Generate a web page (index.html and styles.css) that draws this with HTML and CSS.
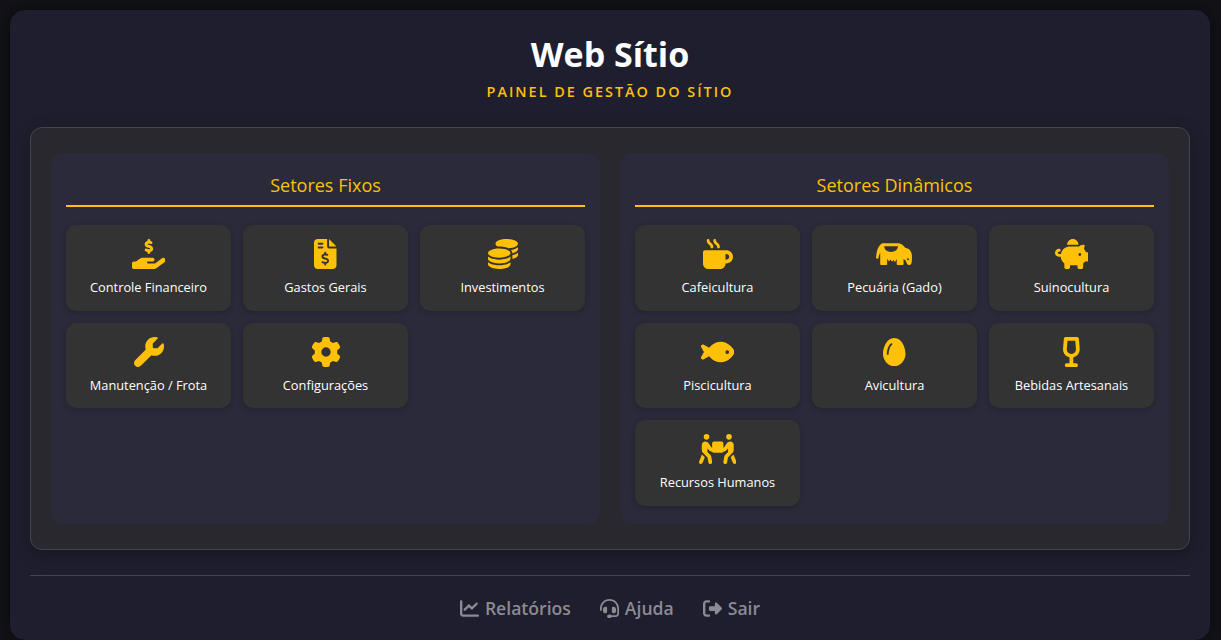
FILE: index.html
```html
<!DOCTYPE html>
<html lang="pt-BR">
<head>
    <meta charset="UTF-8">
    <title>Web Sítio</title>
    <link rel="stylesheet" href="styles.css">
</head>
<body>
    <div class="app">
        <header class="top">
            <h1>Web Sítio</h1>
            <p class="subtitle">Painel de Gestão do Sítio</p>
        </header>

        <main class="board">
            <section class="sector">
                <h2>Setores Fixos</h2>
                <div class="grid">
                    <a class="tile" href="#">
                        <svg class="icon" viewBox="0 0 576 512"><path d="M312 24V34.5c6.4 1.2 12.6 2.7 18.2 4.2c12.8 3.4 20.4 16.6 17 29.4s-16.6 20.4-29.4 17c-10.9-2.9-21.1-4.9-30.2-5c-7.3-.1-14.7 1.7-19.4 4.4c-2.1 1.3-3.1 2.4-3.5 3c-.3 .5-.7 1.2-.7 2.8c0 .3 0 .5 0 .6c.2 .2 .9 1.2 3.3 2.6c5.8 3.5 14.4 6.2 27.4 10.1l.9 .3c11.1 3.3 25.9 7.8 37.9 15.3c13.7 8.6 26.1 22.9 26.4 44.9c.3 22.5-11.4 38.9-26.7 48.5c-6.7 4.1-13.9 7-21.3 8.8V232c0 13.3-10.7 24-24 24s-24-10.7-24-24V220.6c-9.5-2.3-18.2-5.3-25.6-7.8c-2.1-.7-4.1-1.4-6-2c-12.6-4.2-19.4-17.8-15.2-30.4s17.8-19.4 30.4-15.2c2.6 .9 5 1.7 7.3 2.5c13.6 4.6 23.4 7.9 33.9 8.3c8 .3 15.1-1.6 19.2-4.1c1.9-1.2 2.8-2.2 3.2-2.9c.4-.6 .9-1.8 .8-4.1l0-.2c0-1 0-2.1-4-4.6c-5.7-3.6-14.3-6.4-27.1-10.3l-1.9-.6c-10.8-3.2-25-7.5-36.4-14.4c-13.5-8.1-26.5-22-26.6-44.1c-.1-22.9 12.9-38.6 27.7-47.4c6.4-3.8 13.3-6.4 20.2-8.2V24c0-13.3 10.7-24 24-24s24 10.7 24 24zM568.2 336.3c13.1 17.8 9.3 42.8-8.5 55.9L433.1 485.5c-23.4 17.2-51.6 26.5-80.7 26.5H192 32c-17.7 0-32-14.3-32-32V416c0-17.7 14.3-32 32-32H68.8l44.9-36c22.7-18.2 50.9-28 80-28H272h16 64c17.7 0 32 14.3 32 32s-14.3 32-32 32H288 272c-8.8 0-16 7.2-16 16s7.2 16 16 16H392.6l119.7-88.2c17.8-13.1 42.8-9.3 55.9 8.5z"/></svg>
                        <span>Controle Financeiro</span>
                    </a>
                    <a class="tile" href="#">
                        <svg class="icon" viewBox="0 0 384 512"><path d="M64 0C28.7 0 0 28.7 0 64V448c0 35.3 28.7 64 64 64H320c35.3 0 64-28.7 64-64V160H256c-17.7 0-32-14.3-32-32V0H64zM256 0V128H384L256 0zM64 80c0-8.8 7.2-16 16-16h64c8.8 0 16 7.2 16 16s-7.2 16-16 16H80c-8.8 0-16-7.2-16-16zm0 64c0-8.8 7.2-16 16-16h64c8.8 0 16 7.2 16 16s-7.2 16-16 16H80c-8.8 0-16-7.2-16-16zm128 72c8.8 0 16 7.2 16 16v17.3c8.5 1.2 16.7 3.1 24.1 5.1c8.5 2.3 13.6 11 11.3 19.6s-11 13.6-19.6 11.3c-11.1-3-22-5.2-32.1-5.3c-8.4-.1-17.4 1.8-23.6 5.5c-5.7 3.4-8.1 7.3-8.1 12.8c0 3.7 1.3 6.5 7.3 10.1c6.9 4.1 16.6 7.1 29.2 10.9l.5 .1c11.3 3.4 25.3 7.6 36.3 14.6c12.1 7.6 22.4 19.7 22.7 38.2c.3 19.3-9.6 33.3-22.9 41.6c-7.7 4.8-16.4 7.6-25.1 9.1V440c0 8.8-7.2 16-16 16s-16-7.2-16-16V422.2c-11.2-2.1-21.7-5.7-30.9-8.9c-2.1-.7-4.2-1.4-6.2-2.1c-8.4-2.8-12.9-11.9-10.1-20.2s11.9-12.9 20.2-10.1c2.5 .8 4.8 1.6 7.1 2.4c13.6 4.6 24.6 8.4 36.3 8.7c9.1 .3 17.9-1.7 23.7-5.3c5.1-3.2 7.9-7.3 7.8-14c-.1-4.6-1.8-7.8-7.7-11.6c-6.8-4.3-16.5-7.4-29-11.2l-1.6-.5c-11-3.3-24.3-7.3-34.8-13.7c-12-7.2-22.6-18.9-22.7-37.3c-.1-19.4 10.8-32.8 23.8-40.5c7.5-4.4 15.8-7.2 24.1-8.7V232c0-8.8 7.2-16 16-16z"/></svg>
                        <span>Gastos Gerais</span>
                    </a>
                    <a class="tile" href="#">
                        <svg class="icon" viewBox="0 0 512 512"><path d="M512 80c0 18-14.3 34.6-38.4 48c-29.1 16.1-72.5 27.5-122.3 30.9c-3.7-1.8-7.4-3.5-11.3-5C300.6 137.4 248.2 128 192 128c-8.3 0-16.4 .2-24.5 .6l-1.1-.6C142.3 114.6 128 98 128 80c0-44.2 86-80 192-80S512 35.8 512 80zM160.7 161.1c10.2-.7 20.7-1.1 31.3-1.1c62.2 0 117.4 12.3 152.5 31.4C369.3 204.9 384 221.7 384 240c0 4-.7 7.9-2.1 11.7c-4.6 13.2-17 25.3-35 35.5c-.1 .1-.3 .1-.4 .2c-.3 .2-.6 .3-.9 .5c-35 19.4-90.8 32-153.6 32c-59.6 0-112.9-11.3-148.2-29.1c-1.9-.9-3.7-1.9-5.5-2.9C14.3 274.6 0 258 0 240c0-34.8 53.4-64.5 128-75.4c10.5-1.5 21.4-2.7 32.7-3.5zM416 240c0-21.9-10.6-39.9-24.1-53.4c28.3-4.4 54.2-11.4 76.2-20.5c16.3-6.8 31.5-15.2 43.9-25.5V176c0 19.3-16.5 37.1-43.8 50.9c-14.6 7.4-32.4 13.7-52.4 18.5c.1-1.8 .2-3.5 .2-5.3zm-32 96c0 18-14.3 34.6-38.4 48c-1.8 1-3.6 1.9-5.5 2.9C304.9 404.7 251.6 416 192 416c-62.8 0-118.6-12.6-153.6-32C14.3 370.6 0 354 0 336V300.6c12.5 10.3 27.6 18.7 43.9 25.5C83.4 342.6 135.8 352 192 352s108.6-9.4 148.1-25.9c7.8-3.2 15.3-6.9 22.4-10.9c6.1-3.4 11.8-7.2 17.2-11.2c1.5-1.1 2.9-2.3 4.3-3.4V304v5.7V336zm32 0V304 278.1c19-4.2 36.5-9.5 52.1-16c16.3-6.8 31.5-15.2 43.9-25.5V272c0 10.5-5 21-14.9 30.9c-16.3 16.3-45 29.7-81.3 38.4c.1-1.7 .2-3.5 .2-5.3zM192 448c56.2 0 108.6-9.4 148.1-25.9c16.3-6.8 31.5-15.2 43.9-25.5V432c0 44.2-86 80-192 80S0 476.2 0 432V396.6c12.5 10.3 27.6 18.7 43.9 25.5C83.4 438.6 135.8 448 192 448z"/></svg>
                        <span>Investimentos</span>
                    </a>
                    <a class="tile" href="#">
                        <svg class="icon" viewBox="0 0 512 512"><path d="M352 320c88.4 0 160-71.6 160-160c0-15.3-2.2-30.1-6.2-44.2c-3.1-10.8-16.4-13.2-24.3-5.3l-76.8 76.8c-3 3-7.1 4.7-11.3 4.7H336c-8.8 0-16-7.2-16-16V118.6c0-4.2 1.7-8.3 4.7-11.3l76.8-76.8c7.9-7.9 5.4-21.2-5.3-24.3C382.1 2.2 367.3 0 352 0C263.6 0 192 71.6 192 160c0 19.1 3.4 37.5 9.5 54.5L19.9 396.1C7.2 408.8 0 426.1 0 444.1C0 481.6 30.4 512 67.9 512c18 0 35.3-7.2 48-19.9L297.5 310.5c17 6.2 35.4 9.5 54.5 9.5z"/></svg>
                        <span>Manutenção / Frota</span>
                    </a>
                    <a class="tile" href="#">
                        <svg class="icon" viewBox="0 0 512 512"><path d="M495.9 166.6c3.2 8.7 .5 18.4-6.4 24.6l-43.3 39.4c1.1 8.3 1.7 16.8 1.7 25.4s-.6 17.1-1.7 25.4l43.3 39.4c6.9 6.2 9.6 15.9 6.4 24.6c-4.4 11.9-9.7 23.3-15.8 34.3l-4.7 8.1c-6.6 11-14 21.4-22.1 31.2c-5.9 7.2-15.7 9.6-24.5 6.8l-55.7-17.7c-13.4 10.3-28.2 18.9-44 25.4l-12.5 57.1c-2 9.1-9 16.3-18.2 17.8c-13.8 2.3-28 3.5-42.5 3.5s-28.7-1.2-42.5-3.5c-9.2-1.5-16.2-8.7-18.2-17.8l-12.5-57.1c-15.8-6.5-30.6-15.1-44-25.4L83.1 425.9c-8.8 2.8-18.6 .3-24.5-6.8c-8.1-9.8-15.5-20.2-22.1-31.2l-4.7-8.1c-6.1-11-11.4-22.4-15.8-34.3c-3.2-8.7-.5-18.4 6.4-24.6l43.3-39.4C64.6 273.1 64 264.6 64 256s.6-17.1 1.7-25.4L22.4 191.2c-6.9-6.2-9.6-15.9-6.4-24.6c4.4-11.9 9.7-23.3 15.8-34.3l4.7-8.1c6.6-11 14-21.4 22.1-31.2c5.9-7.2 15.7-9.6 24.5-6.8l55.7 17.7c13.4-10.3 28.2-18.9 44-25.4l12.5-57.1c2-9.1 9-16.3 18.2-17.8C227.3 1.2 241.5 0 256 0s28.7 1.2 42.5 3.5c9.2 1.5 16.2 8.7 18.2 17.8l12.5 57.1c15.8 6.5 30.6 15.1 44 25.4l55.7-17.7c8.8-2.8 18.6-.3 24.5 6.8c8.1 9.8 15.5 20.2 22.1 31.2l4.7 8.1c6.1 11 11.4 22.4 15.8 34.3zM256 336a80 80 0 1 0 0-160 80 80 0 1 0 0 160z"/></svg>
                        <span>Configurações</span>
                    </a>
                </div>
            </section>

            <section class="sector">
                <h2>Setores Dinâmicos</h2>
                <div class="grid">
                    <a class="tile" href="#">
                        <svg class="icon" viewBox="0 0 512 512"><path d="M88 0C74.7 0 64 10.7 64 24c0 38.9 23.4 59.4 39.1 73.1l1.1 1C120.5 112.3 128 119.9 128 136c0 13.3 10.7 24 24 24s24-10.7 24-24c0-38.9-23.4-59.4-39.1-73.1l-1.1-1C119.5 47.7 112 40.1 112 24c0-13.3-10.7-24-24-24zM32 192c-17.7 0-32 14.3-32 32V416c0 53 43 96 96 96H288c53 0 96-43 96-96h16c61.9 0 112-50.1 112-112s-50.1-112-112-112H352 32zm352 64h16c26.5 0 48 21.5 48 48s-21.5 48-48 48H384V256zM224 24c0-13.3-10.7-24-24-24s-24 10.7-24 24c0 38.9 23.4 59.4 39.1 73.1l1.1 1C232.5 112.3 240 119.9 240 136c0 13.3 10.7 24 24 24s24-10.7 24-24c0-38.9-23.4-59.4-39.1-73.1l-1.1-1C231.5 47.7 224 40.1 224 24z"/></svg>
                        <span>Cafeicultura</span>
                    </a>
                    <a class="tile" href="#">
                        <svg class="icon" viewBox="0 0 640 512"><path fill-rule="evenodd" d="M0 330C6 230 30 110 110 74H385C435 74 470 115 500 150L560 170C590 190 608 235 612 275C616 330 614 395 600 425C585 450 545 450 530 428L505 365L470 340V430Q470 444 456 444H370Q354 444 354 430V345Q340 350 335 380Q325 400 312 378Q306 355 292 358Q284 400 266 378Q256 352 240 355Q232 392 214 375Q205 350 190 340V430Q190 444 176 444H88Q72 444 72 430V230Q50 270 42 330Q20 345 0 330ZM140 125C145 190 195 220 258 220C320 220 370 190 375 125ZM545 330A17 17 0 1 0 545 364A17 17 0 1 0 545 330Z"/></svg>
                        <span>Pecuária (Gado)</span>
                    </a>
                    <a class="tile" href="#">
                        <svg class="icon" viewBox="0 0 576 512"><path d="M400 96l0 .7c-5.3-.4-10.6-.7-16-.7H256c-16.5 0-32.5 2.1-47.8 6c-.1-2-.2-4-.2-6c0-53 43-96 96-96s96 43 96 96zm-16 32c3.5 0 7 .1 10.4 .3c4.2 .3 8.4 .7 12.6 1.3C424.6 109.1 450.8 96 480 96h11.5c10.4 0 18 9.8 15.5 19.9l-13.8 55.2c15.8 14.8 28.7 32.8 37.5 52.9H544c17.7 0 32 14.3 32 32v96c0 17.7-14.3 32-32 32H512c-9.1 12.1-19.9 22.9-32 32v64c0 17.7-14.3 32-32 32H416c-17.7 0-32-14.3-32-32V448H256v32c0 17.7-14.3 32-32 32H192c-17.7 0-32-14.3-32-32V416c-34.9-26.2-58.7-66.3-63.2-112H68c-37.6 0-68-30.4-68-68s30.4-68 68-68h4c13.3 0 24 10.7 24 24s-10.7 24-24 24H68c-11 0-20 9-20 20s9 20 20 20H99.2c12.1-59.8 57.7-107.5 116.3-122.8c12.9-3.4 26.5-5.2 40.5-5.2H384zm64 136a24 24 0 1 0 -48 0 24 24 0 1 0 48 0z"/></svg>
                        <span>Suinocultura</span>
                    </a>
                    <a class="tile" href="#">
                        <svg class="icon" viewBox="0 0 576 512"><path d="M180.5 141.5C219.7 108.5 272.6 80 336 80s116.3 28.5 155.5 61.5c39.1 33 66.9 72.4 81 99.8c4.7 9.2 4.7 20.1 0 29.3c-14.1 27.4-41.9 66.8-81 99.8C452.3 403.5 399.4 432 336 432s-116.3-28.5-155.5-61.5c-16.2-13.7-30.5-28.5-42.7-43.1L48.1 379.6c-12.5 7.3-28.4 5.3-38.7-4.9S-3 348.7 4.2 336.1L50 256 4.2 175.9c-7.2-12.6-5-28.4 5.3-38.6s26.1-12.2 38.7-4.9l89.7 52.3c12.2-14.6 26.5-29.4 42.7-43.1zM448 288a32 32 0 1 0 0-64 32 32 0 1 0 0 64z"/></svg>
                        <span>Piscicultura</span>
                    </a>
                    <a class="tile" href="#">
                        <svg class="icon" viewBox="0 0 384 512"><path d="M192 496C86 496 0 394 0 288C0 176 64 16 192 16s192 160 192 272c0 106-86 208-192 208zM154.8 134c6.5-6 7-16.1 1-22.6s-16.1-7-22.6-1c-23.9 21.8-41.1 52.7-52.3 84.2C69.7 226.1 64 259.7 64 288c0 8.8 7.2 16 16 16s16-7.2 16-16c0-24.5 5-54.4 15.1-82.8c10.1-28.5 25-54.1 43.7-71.2z"/></svg>
                        <span>Avicultura</span>
                    </a>
                    <a class="tile" href="#">
                        <svg class="icon" viewBox="0 0 320 512"><path d="M64 0C47.4 0 33.5 12.8 32.1 29.3l-14 168.4c-6 72 42.5 135.2 109.9 150.6V448H80c-17.7 0-32 14.3-32 32s14.3 32 32 32h80 80c17.7 0 32-14.3 32-32s-14.3-32-32-32H192V348.4c67.4-15.5 115.9-78.6 109.9-150.6l-14-168.4C286.5 12.8 272.6 0 256 0H64zM81.9 203.1L93.4 64H226.6l11.6 139.1C242 248.8 205.9 288 160 288s-82-39.2-78.1-84.9z"/></svg>
                        <span>Bebidas Artesanais</span>
                    </a>
                    <a class="tile" href="#">
                        <svg class="icon" viewBox="0 0 640 512"><path d="M80 48a48 48 0 1 1 96 0A48 48 0 1 1 80 48zm64 193.7v65.1l51 51c7.1 7.1 11.8 16.2 13.4 26.1l15.2 90.9c2.9 17.4-8.9 33.9-26.3 36.8s-33.9-8.9-36.8-26.3l-14.3-85.9L66.8 320C54.8 308 48 291.7 48 274.7V186.6c0-32.4 26.2-58.6 58.6-58.6c24.1 0 46.5 12 59.9 32l47.4 71.1 10.1 5V160c0-17.7 14.3-32 32-32H384c17.7 0 32 14.3 32 32v76.2l10.1-5L473.5 160c13.3-20 35.8-32 59.9-32c32.4 0 58.6 26.2 58.6 58.6v88.1c0 17-6.7 33.3-18.7 45.3l-79.4 79.4-14.3 85.9c-2.9 17.4-19.4 29.2-36.8 26.3s-29.2-19.4-26.3-36.8l15.2-90.9c1.6-9.9 6.3-19 13.4-26.1l51-51V241.7l-19 28.5c-4.6 7-11 12.6-18.5 16.3l-59.6 29.8c-2.4 1.3-4.9 2.2-7.6 2.8c-2.6 .6-5.3 .9-7.9 .8H256.7c-2.5 .1-5-.2-7.5-.7c-2.9-.6-5.6-1.6-8.1-3l-59.5-29.8c-7.5-3.7-13.8-9.4-18.5-16.3l-19-28.5zM2.3 468.1L50.1 348.6l49.2 49.2-37.6 94c-6.6 16.4-25.2 24.4-41.6 17.8S-4.3 484.5 2.3 468.1zM512 0a48 48 0 1 1 0 96 48 48 0 1 1 0-96zm77.7 348.6l47.8 119.5c6.6 16.4-1.4 35-17.8 41.6s-35-1.4-41.6-17.8l-37.6-94 49.2-49.2z"/></svg>
                        <span>Recursos Humanos</span>
                    </a>
                </div>
            </section>
        </main>

        <footer class="bottom">
            <a href="#">
                <svg class="icon-small" viewBox="0 0 512 512"><path d="M64 64c0-17.7-14.3-32-32-32S0 46.3 0 64V400c0 44.2 35.8 80 80 80H480c17.7 0 32-14.3 32-32s-14.3-32-32-32H80c-8.8 0-16-7.2-16-16V64zm406.6 86.6c12.5-12.5 12.5-32.8 0-45.3s-32.8-12.5-45.3 0L320 210.7l-57.4-57.4c-12.5-12.5-32.8-12.5-45.3 0l-112 112c-12.5 12.5-12.5 32.8 0 45.3s32.8 12.5 45.3 0L240 221.3l57.4 57.4c12.5 12.5 32.8 12.5 45.3 0l128-128z"/></svg>
                Relatórios
            </a>
            <a href="#">
                <svg class="icon-small" viewBox="0 0 512 512"><path d="M256 48C141.1 48 48 141.1 48 256v40c0 13.3-10.7 24-24 24s-24-10.7-24-24V256C0 114.6 114.6 0 256 0S512 114.6 512 256V400.1c0 48.6-39.4 88-88.1 88L313.6 488c-8.3 14.3-23.8 24-41.6 24H240c-26.5 0-48-21.5-48-48s21.5-48 48-48h32c17.8 0 33.3 9.7 41.6 24l110.4 .1c22.1 0 40-17.9 40-40V256c0-114.9-93.1-208-208-208zM144 208h16c17.7 0 32 14.3 32 32V352c0 17.7-14.3 32-32 32H144c-35.3 0-64-28.7-64-64V272c0-35.3 28.7-64 64-64zm224 0c35.3 0 64 28.7 64 64v48c0 35.3-28.7 64-64 64H352c-17.7 0-32-14.3-32-32V240c0-17.7 14.3-32 32-32h16z"/></svg>
                Ajuda
            </a>
            <a href="#">
                <svg class="icon-small" viewBox="0 0 512 512"><path d="M377.9 105.9L500.7 228.7c7.2 7.2 11.3 17.1 11.3 27.3s-4.1 20.1-11.3 27.3L377.9 406.1c-6.4 6.4-15 9.9-24 9.9c-18.7 0-33.9-15.2-33.9-33.9l0-62.1-128 0c-17.7 0-32-14.3-32-32l0-64c0-17.7 14.3-32 32-32l128 0 0-62.1c0-18.7 15.2-33.9 33.9-33.9c9 0 17.6 3.6 24 9.9zM160 96L96 96c-17.7 0-32 14.3-32 32l0 256c0 17.7 14.3 32 32 32l64 0c17.7 0 32 14.3 32 32s-14.3 32-32 32l-64 0c-53 0-96-43-96-96L0 128C0 75 43 32 96 32l64 0c17.7 0 32 14.3 32 32s-14.3 32-32 32z"/></svg>
                Sair
            </a>
        </footer>
    </div>
</body>
</html>
```

FILE: styles.css
```css
* {
    box-sizing: border-box;
}
html, body {
    height: 100%;
}
body {
    margin: 0;
    padding: 10px 0 0 10px;
    background: #121218;
    color: white;
    font-family: "Open Sans", "Noto Sans", sans-serif;
    overflow: hidden;
}
.app {
    width: 1200px;
    height: 630px;
    padding: 20px 20px 0;
    background: #1e1e2e;
    border-radius: 15px;
    box-shadow: 0 0 20px rgba(0, 0, 0, 0.5);
    display: flex;
    flex-direction: column;
}
.top {
    text-align: center;
    height: 97px;
}
h1 {
    margin: 0;
    font-size: 34px;
    line-height: 48px;
    font-weight: 700;
}
.subtitle {
    margin: 4px 0 0;
    font-size: 14.4px;
    line-height: 19px;
    font-weight: 600;
    letter-spacing: 2px;
    text-transform: uppercase;
    color: #ffc107;
}
.board {
    height: 423px;
    padding: 25px 20px;
    display: grid;
    grid-template-columns: 1fr 1fr;
    gap: 20px;
    background: #28282e;
    border: 1px solid #45454d;
    border-radius: 12px;
    box-shadow: 0 4px 16px rgba(0, 0, 0, 0.3);
}
.sector {
    padding: 15px;
    background: #2a2a3a;
    border-radius: 12px;
}
h2 {
    margin: 0 0 18px;
    height: 39px;
    border-bottom: 2px solid #ffc107;
    color: #ffc107;
    font-size: 18px;
    line-height: 34px;
    font-weight: 400;
    text-align: center;
}
.grid {
    display: grid;
    grid-template-columns: repeat(3, 1fr);
    gap: 12px;
}
.tile {
    height: 85.6px;
    padding-top: 14px;
    display: flex;
    flex-direction: column;
    align-items: center;
    background: #333333;
    border-radius: 10px;
    box-shadow: 0 2px 6px rgba(0, 0, 0, 0.2);
    color: white;
    font-size: 12.8px;
    line-height: 18px;
    text-decoration: none;
}
.icon {
    height: 30px;
    margin-bottom: 9px;
    fill: #ffc107;
}
.bottom {
    margin-top: 25px;
    padding-top: 20px;
    border-top: 1px solid #45454d;
    display: flex;
    justify-content: center;
    gap: 29px;
}
.bottom a {
    display: flex;
    align-items: center;
    gap: 6px;
    color: #8b8b92;
    font-size: 17.6px;
    line-height: 24px;
    font-weight: 600;
    text-decoration: none;
}
.icon-small {
    height: 19px;
    fill: #8b8b92;
}
```
